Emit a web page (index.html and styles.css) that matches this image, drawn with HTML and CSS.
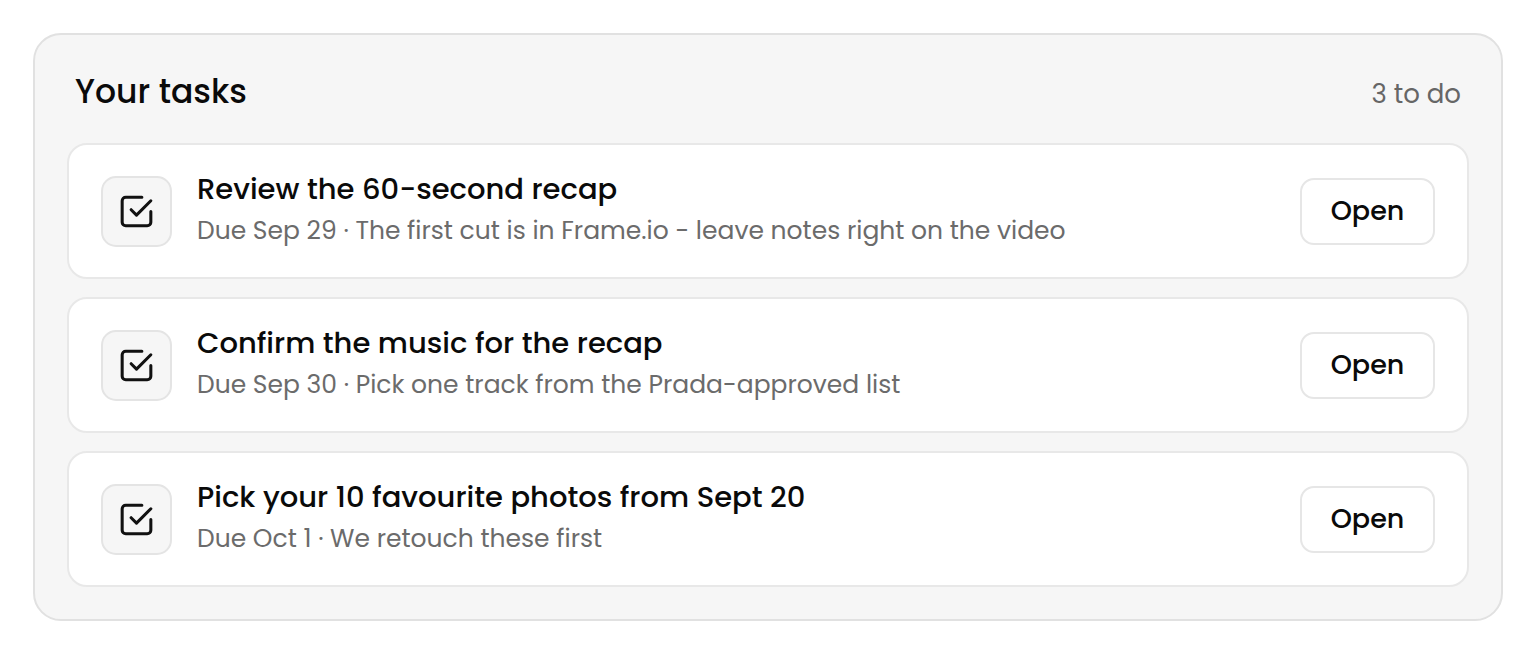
FILE: index.html
```html
<!DOCTYPE html>
<html lang="en">
<head>
<meta charset="utf-8">
<title>Your tasks</title>
<link rel="stylesheet" href="styles.css">
</head>
<body>
<section class="card">
  <header class="card-head">
    <h2 class="card-title">Your tasks</h2>
    <span class="count">3 to do</span>
  </header>
  <ul class="tasks">
    <li class="task">
      <span class="task-icon">
        <svg viewBox="0 0 24 24" width="43" height="43" fill="none" stroke="currentColor" stroke-width="1.7" stroke-linecap="round" stroke-linejoin="round"><path d="M9 11l3 3l8 -8"/><path d="M20 12v6a2 2 0 0 1 -2 2h-12a2 2 0 0 1 -2 -2v-12a2 2 0 0 1 2 -2h9"/></svg>
      </span>
      <div class="task-body">
        <div class="task-title">Review the 60-second recap</div>
        <div class="task-meta">Due Sep 29 · The first cut is in Frame.io - leave notes right on the video</div>
      </div>
      <button class="open-btn">Open</button>
    </li>
    <li class="task">
      <span class="task-icon">
        <svg viewBox="0 0 24 24" width="43" height="43" fill="none" stroke="currentColor" stroke-width="1.7" stroke-linecap="round" stroke-linejoin="round"><path d="M9 11l3 3l8 -8"/><path d="M20 12v6a2 2 0 0 1 -2 2h-12a2 2 0 0 1 -2 -2v-12a2 2 0 0 1 2 -2h9"/></svg>
      </span>
      <div class="task-body">
        <div class="task-title">Confirm the music for the recap</div>
        <div class="task-meta">Due Sep 30 · Pick one track from the Prada-approved list</div>
      </div>
      <button class="open-btn">Open</button>
    </li>
    <li class="task">
      <span class="task-icon">
        <svg viewBox="0 0 24 24" width="43" height="43" fill="none" stroke="currentColor" stroke-width="1.7" stroke-linecap="round" stroke-linejoin="round"><path d="M9 11l3 3l8 -8"/><path d="M20 12v6a2 2 0 0 1 -2 2h-12a2 2 0 0 1 -2 -2v-12a2 2 0 0 1 2 -2h9"/></svg>
      </span>
      <div class="task-body">
        <div class="task-title">Pick your 10 favourite photos from Sept 20</div>
        <div class="task-meta">Due Oct 1 · We retouch these first</div>
      </div>
      <button class="open-btn">Open</button>
    </li>
  </ul>
</section>
</body>
</html>
```
FILE: styles.css
```css
* { box-sizing: border-box; }
html, body { margin: 0; padding: 0; background: #ffffff; }
body {
  font-family: "Poppins", "Inter", "Open Sans", sans-serif;
  color: #0d0d0d;
  padding: 33px 33px 0 33px;
}
.card {
  width: 1470px;
  background: #f6f6f6;
  border: 2px solid #e1e1e1;
  border-radius: 28px;
  padding: 32px;
}
.card-head {
  display: flex;
  align-items: baseline;
  justify-content: space-between;
  height: 48px;
  padding-left: 8px;
  padding-right: 8px;
  margin-bottom: 28px;
}
.card-title {
  margin: 0;
  font-size: 33px;
  font-weight: 500;
  color: #0a0a0a;
}
.count {
  font-size: 26px;
  color: #666666;
}
.tasks {
  list-style: none;
  margin: 0;
  padding: 0;
  display: flex;
  flex-direction: column;
  gap: 18px;
}
.task {
  display: flex;
  align-items: center;
  background: #ffffff;
  border: 2px solid #e8e8e8;
  border-radius: 20px;
  padding: 30px 32px;
  height: 136px;
}
.task-icon {
  flex: none;
  width: 71px;
  height: 71px;
  display: flex;
  align-items: center;
  justify-content: center;
  background: #f6f6f6;
  border: 2px solid #e4e4e4;
  border-radius: 15px;
  color: #111111;
  margin-right: 25px;
}
.task-body {
  flex: 1;
  min-width: 0;
  display: flex;
  flex-direction: column;
  padding-bottom: 4px;
}
.task-title {
  font-size: 29px;
  font-weight: 500;
  line-height: 40px;
  margin-bottom: 4px;
  color: #0a0a0a;
}
.task-meta {
  font-size: 25px;
  line-height: 36px;
  color: #6b6b6b;
}
.open-btn {
  flex: none;
  width: 135px;
  height: 67px;
  background: #ffffff;
  border: 2px solid #e6e6e6;
  border-radius: 14px;
  font-family: inherit;
  font-size: 27px;
  font-weight: 500;
  color: #0a0a0a;
  cursor: pointer;
}
```
